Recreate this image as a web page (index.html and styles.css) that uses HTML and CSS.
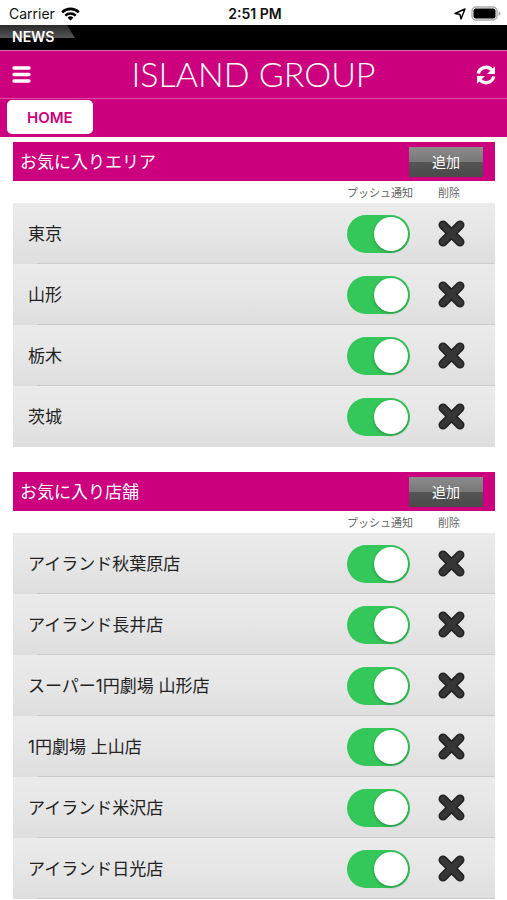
FILE: index.html
```html
<!DOCTYPE html>
<html lang="ja">
<head>
    <meta charset="UTF-8">
    <meta name="viewport" content="width=device-width, initial-scale=1.0">
    <title>ISLAND GROUP</title>
    <link rel="stylesheet" href="styles.css">
</head>
<body>
    <svg class="defs" aria-hidden="true">
        <symbol id="cross" viewBox="0 0 28 28">
            <path d="M5 5L22 22M22 5L5 22" stroke="#222" stroke-width="9" stroke-linecap="round"/>
            <path d="M5 5L22 22M22 5L5 22" stroke="#363636" stroke-width="6" stroke-linecap="round"/>
        </symbol>
    </svg>

    <div class="status">
        <div class="carrier">
            <span>Carrier</span>
            <svg width="19" height="14" viewBox="0 0 19 14" fill="none" stroke="#000" stroke-width="2.6">
                <path d="M1.2 5.2a12 12 0 0 1 16.600 0"/>
                <path d="M4.3 8.6a7.500 7.500 0 0 1 10.400 0"/>
                <path d="M9.5 13.6L6.600 10.700a4.200 4.200 0 0 1 5.800 0z" fill="#000" stroke="none"/>
            </svg>
        </div>
        <div class="time">2:51 PM</div>
        <div class="power">
            <svg width="12" height="12" viewBox="0 0 12 12" fill="none" stroke="#000" stroke-width="1.4" stroke-linejoin="round">
                <path d="M1 5.500L11 1L7 11L6 6.500z"/>
            </svg>
            <svg width="30" height="15" viewBox="0 0 30 15">
                <rect x="1" y="1" width="25" height="13" rx="4" fill="#fff" stroke="#aaa" stroke-width="1.4"/>
                <rect x="2.5" y="2.5" width="22" height="10" rx="2" fill="#000"/>
                <path d="M27.5 5v5q2-1 2-2.500t-2-2.500z" fill="#aaa"/>
            </svg>
        </div>
    </div>

    <div class="news"><span class="news-label">NEWS</span></div>

    <header class="header">
        <button class="icon-btn" aria-label="メニュー">
            <svg width="19" height="17" viewBox="0 0 19 17" stroke="#fff" stroke-width="3.4" stroke-linecap="round">
                <path d="M2 2h15M2 8.500h15M2 15h15"/>
            </svg>
        </button>
        <h1 class="logo">ISLAND GROUP</h1>
        <button class="icon-btn" aria-label="更新">
            <svg width="20" height="20" viewBox="0 0 20 20">
                <path d="M2.300 8.500A7.800 7.800 0 0 1 15.800 5M17.700 11.500A7.800 7.800 0 0 1 4.200 15" fill="none" stroke="#fff" stroke-width="3.4"/>
                <path d="M19 1.300v7.700h-8zM1 18.700v-7.700h8z" fill="#fff"/>
            </svg>
        </button>
    </header>

    <nav class="tabs">
        <a class="tab" href="#">HOME</a>
    </nav>

    <main>
        <section class="favorites">
            <div class="title-bar">
                <h2>お気に入りエリア</h2>
                <button class="add">追加</button>
            </div>
            <table>
                <thead>
                    <tr><th class="name"></th><th class="push">プッシュ通知</th><th class="del">削除</th></tr>
                </thead>
                <tbody>
                    <tr>
                        <td class="name"><label for="a1">東京</label></td>
                        <td><input type="checkbox" id="a1" class="switch" checked></td>
                        <td><button class="remove" aria-label="削除"><svg><use href="#cross"/></svg></button></td>
                    </tr>
                    <tr>
                        <td class="name"><label for="a2">山形</label></td>
                        <td><input type="checkbox" id="a2" class="switch" checked></td>
                        <td><button class="remove" aria-label="削除"><svg><use href="#cross"/></svg></button></td>
                    </tr>
                    <tr>
                        <td class="name"><label for="a3">栃木</label></td>
                        <td><input type="checkbox" id="a3" class="switch" checked></td>
                        <td><button class="remove" aria-label="削除"><svg><use href="#cross"/></svg></button></td>
                    </tr>
                    <tr>
                        <td class="name"><label for="a4">茨城</label></td>
                        <td><input type="checkbox" id="a4" class="switch" checked></td>
                        <td><button class="remove" aria-label="削除"><svg><use href="#cross"/></svg></button></td>
                    </tr>
                </tbody>
            </table>
        </section>

        <section class="favorites">
            <div class="title-bar">
                <h2>お気に入り店舗</h2>
                <button class="add">追加</button>
            </div>
            <table>
                <thead>
                    <tr><th class="name"></th><th class="push">プッシュ通知</th><th class="del">削除</th></tr>
                </thead>
                <tbody>
                    <tr>
                        <td class="name"><label for="s1">アイランド秋葉原店</label></td>
                        <td><input type="checkbox" id="s1" class="switch" checked></td>
                        <td><button class="remove" aria-label="削除"><svg><use href="#cross"/></svg></button></td>
                    </tr>
                    <tr>
                        <td class="name"><label for="s2">アイランド長井店</label></td>
                        <td><input type="checkbox" id="s2" class="switch" checked></td>
                        <td><button class="remove" aria-label="削除"><svg><use href="#cross"/></svg></button></td>
                    </tr>
                    <tr>
                        <td class="name"><label for="s3">スーパー1円劇場 山形店</label></td>
                        <td><input type="checkbox" id="s3" class="switch" checked></td>
                        <td><button class="remove" aria-label="削除"><svg><use href="#cross"/></svg></button></td>
                    </tr>
                    <tr>
                        <td class="name"><label for="s4">1円劇場 上山店</label></td>
                        <td><input type="checkbox" id="s4" class="switch" checked></td>
                        <td><button class="remove" aria-label="削除"><svg><use href="#cross"/></svg></button></td>
                    </tr>
                    <tr>
                        <td class="name"><label for="s5">アイランド米沢店</label></td>
                        <td><input type="checkbox" id="s5" class="switch" checked></td>
                        <td><button class="remove" aria-label="削除"><svg><use href="#cross"/></svg></button></td>
                    </tr>
                    <tr>
                        <td class="name"><label for="s6">アイランド日光店</label></td>
                        <td><input type="checkbox" id="s6" class="switch" checked></td>
                        <td><button class="remove" aria-label="削除"><svg><use href="#cross"/></svg></button></td>
                    </tr>
                </tbody>
            </table>
        </section>
    </main>
</body>
</html>
```
FILE: styles.css
```css
* {
    box-sizing: border-box;
}
body {
    margin: 0;
    background: #fff;
    color: #222;
    font-family: Inter, "Noto Sans CJK JP", sans-serif;
}
button {
    border: none;
    padding: 0;
    background: none;
    font-family: inherit;
    cursor: pointer;
}
svg {
    display: block;
}
.defs {
    position: absolute;
    width: 0;
    height: 0;
}

/* status bar */
.status {
    display: grid;
    grid-template-columns: 1fr auto 1fr;
    align-items: center;
    height: 25px;
    padding: 2px 6px 0 9px;
    font-size: 14px;
    color: #111;
}
.carrier {
    display: flex;
    align-items: center;
    gap: 6px;
}
.time {
    font-weight: 600;
}
.power {
    display: flex;
    align-items: center;
    justify-content: flex-end;
    gap: 5px;
}

/* news ticker */
.news {
    position: relative;
    height: 25px;
    background: #000;
}
.news::before {
    content: "";
    position: absolute;
    top: 0;
    left: 0;
    width: 75px;
    height: 13px;
    background: linear-gradient(#2a2a2a, #555);
    clip-path: polygon(0 0, 67px 0, 100% 100%, 0 100%);
}
.news-label {
    position: relative;
    padding-left: 12px;
    color: #fff;
    font-size: 14px;
    font-weight: 600;
    line-height: 24px;
}

.header {
    display: flex;
    align-items: center;
    justify-content: space-between;
    height: 48px;
    padding: 0 11px 0 12px;
    background: #cc007e;
    border-top: 1px solid #e06ab4;
}
.logo {
    margin: 0;
    color: #fff;
    font-family: Lato, sans-serif;
    font-size: 34px;
    font-weight: 300;
    line-height: 44px;
    padding-bottom: 2px;
}

.tabs {
    display: flex;
    height: 39px;
    padding: 1px 7px 3px;
    background: #cc007e;
    border-top: 1px solid #e04aa5;
}
.tab {
    padding: 0 20px;
    border-radius: 5px;
    background: #fff;
    color: #cc007e;
    font-size: 15px;
    font-weight: 600;
    line-height: 35px;
    text-decoration: none;
}

main {
    padding: 5px 12px 0 13px;
}
.favorites {
    margin-bottom: 25px;
}
.favorites:last-child {
    margin-bottom: 0;
}
.title-bar {
    display: flex;
    align-items: center;
    justify-content: space-between;
    height: 39px;
    padding: 0 12px 0 7px;
    background: #cc007e;
    color: #fff;
}
.title-bar h2 {
    margin: 0;
    padding-bottom: 2px;
    font-size: 17px;
    font-weight: 400;
}
.add {
    width: 74px;
    height: 30px;
    padding-bottom: 2px;
    background: linear-gradient(#8c8c8c, #777 50%, #555 50%, #4a4a4a);
    color: #fff;
    font-size: 14px;
}

table {
    width: 100%;
    border-collapse: collapse;
    table-layout: fixed;
}
th {
    height: 22px;
    padding: 2px 0 0;
    color: #666;
    font-size: 11px;
    font-weight: 400;
    line-height: 20px;
    text-align: left;
}
.push {
    width: 91px;
}
.del {
    width: 57px;
}
/* the divider starts a little way in from the left edge */
tbody tr {
    background: linear-gradient(#ccc, #ccc) 24px 100% / 100% 1px no-repeat, linear-gradient(#ebebeb, #e6e6e6 50%, #dedede);
}
.favorites:first-child tbody tr:last-child {
    background: linear-gradient(#ebebeb, #e6e6e6 50%, #dedede);
}
td {
    height: 61px;
    padding: 0;
    vertical-align: middle;
}
td.name {
    padding: 0 0 2px 15px;
    font-size: 17px;
}
.switch {
    display: block;
    appearance: none;
    width: 63px;
    height: 38px;
    margin: 0;
    padding: 2px;
    border-radius: 19px;
    background: #bbb;
    cursor: pointer;
}
.switch::before {
    content: "";
    display: block;
    width: 34px;
    height: 34px;
    border-radius: 50%;
    background: #fff;
    box-shadow: 0 1px 3px rgba(0, 0, 0, 0.3);
}
.switch:checked {
    background: #34c759;
}
.switch:checked::before {
    margin-left: auto;
}
.remove {
    display: block;
}
.remove svg {
    width: 28px;
    height: 28px;
}
```
